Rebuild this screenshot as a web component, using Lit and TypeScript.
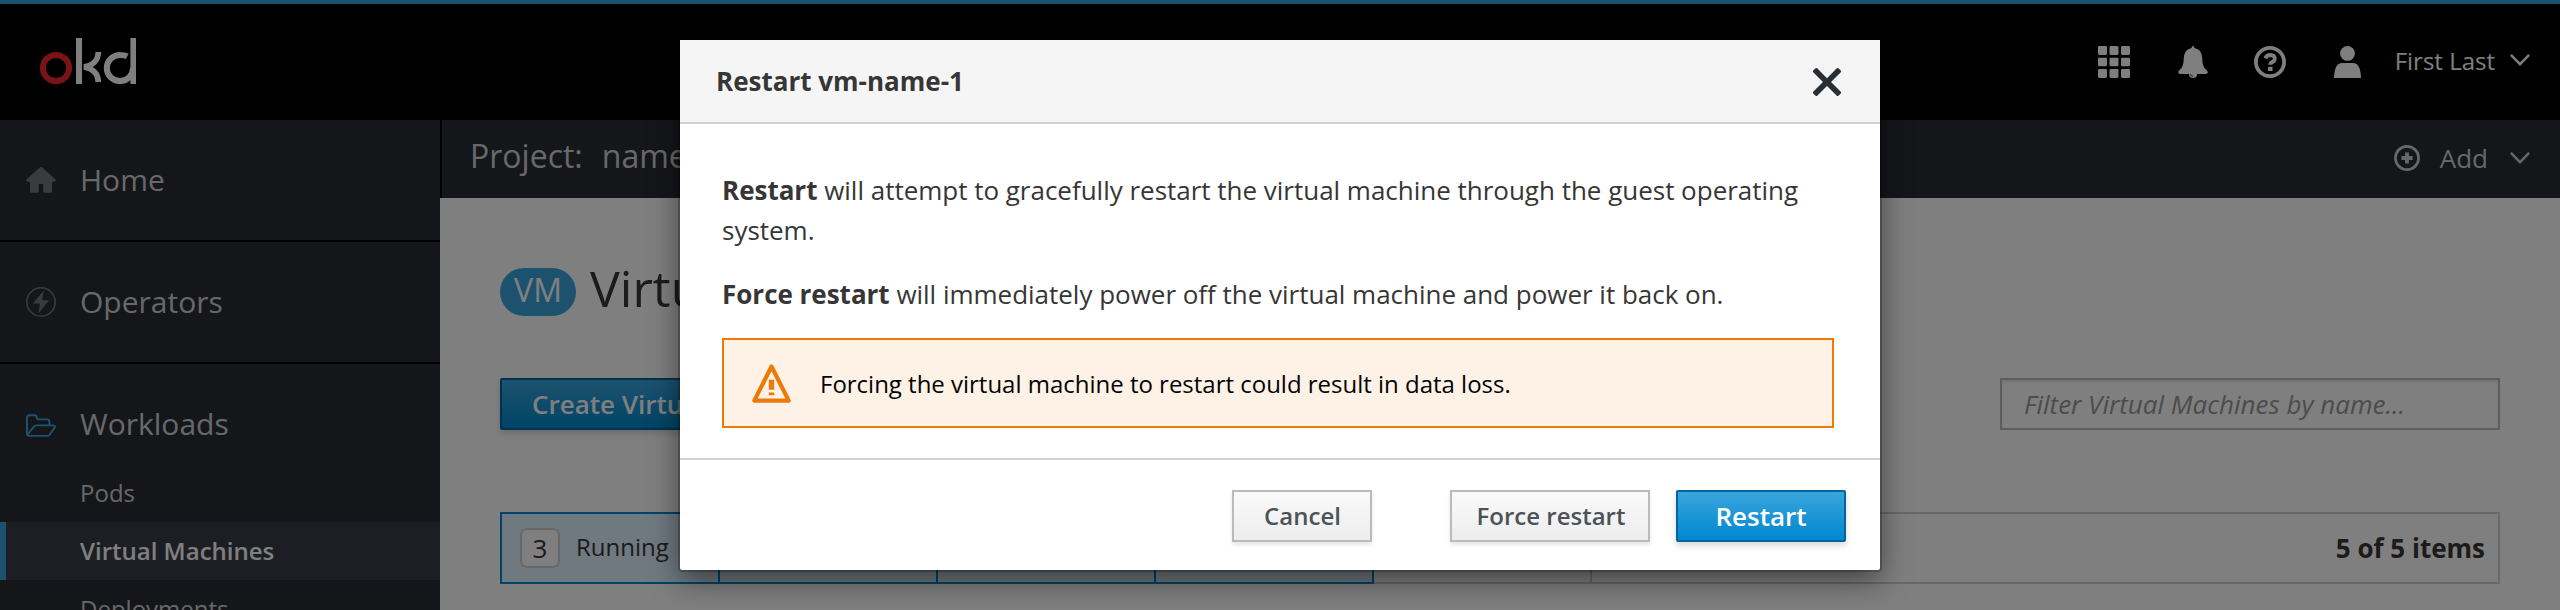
import { LitElement, html, css } from "lit";
import { customElement } from "lit/decorators.js";

const homeIcon = html`<svg width="30" height="30" viewBox="0 0 30 30" fill="currentColor">
  <path d="M15 1.8 Q15.6 1.8 16.2 2.4 L29.4 14.2 Q30.2 15.2 29.4 16.2 Q28.7 17 26 17 V26.2 Q26 27.8 24.4 27.8 H18.6 Q17.2 27.8 17.2 26.4 V19 H12.8 V26.4 Q12.8 27.8 11.4 27.8 H5.6 Q4 27.8 4 26.2 V17 Q1.3 17 .6 16.2 Q-.2 15.2 .6 14.2 L13.8 2.4 Q14.4 1.8 15 1.8Z"/>
</svg>`;

const boltIcon = html`<svg width="30" height="30" viewBox="0 0 30 30">
  <circle cx="15" cy="15" r="14.2" fill="none" stroke="currentColor" stroke-width="1.6"/>
  <path d="M17.8 3.4 L7 16.4 H14 L12.4 26.6 L23 13.2 H16.2Z" fill="currentColor"/>
</svg>`;

const folderIcon = html`<svg width="30" height="24" viewBox="0 0 30 24" fill="none" stroke="currentColor" stroke-width="1.9" stroke-linejoin="round">
  <path d="M1 20 V3.6 Q1 1.2 3.4 1.2 H8.4 Q10.6 1.2 10.8 3.4 Q11 5.4 13 5.4 H21 Q23.4 5.4 23.4 7.8 V11.4"/>
  <path d="M1 20 Q1.2 21.8 3.2 21.9 H21.4 Q22.8 21.9 23.6 20.8 L28.6 13.6 Q29.6 11.6 27.6 11.4 H10.6 Q9 11.4 8 12.6 L1.4 20.6"/>
</svg>`;

const chevron = html`<svg class="chevron" width="20" height="12" viewBox="0 0 20 12" fill="none" stroke="currentColor" stroke-width="2.4">
  <path d="M.9 .9 L10 10.2 L19.1 .9"/>
</svg>`;

const gridIcon = html`<svg width="32" height="32" viewBox="0 0 32 32" fill="currentColor">
  ${[0, 1, 2].map((r) => html`<svg y=${r * 11.5} width="32" height="9">
    <rect x="0" width="9" height="9" rx="1.4"/><rect x="11.5" width="9" height="9" rx="1.4"/><rect x="23" width="9" height="9" rx="1.4"/>
  </svg>`)}
</svg>`;

const bellIcon = html`<svg width="30" height="32" viewBox="0 0 30 32">
  <path fill="currentColor" d="M15 0 Q16.4 0 16.4 2 Q24 3.4 24.2 12 Q24.3 21 28 23.6 Q30 25.4 29.8 26.6 Q29.6 28 28 28 H19 Q19 32 15 32 Q11 32 11 28 H2 Q.4 28 .2 26.6 Q0 25.4 2 23.6 Q5.7 21 5.8 12 Q6 3.4 13.6 2 Q13.6 0 15 0Z"/>
  <path d="M12.6 28.2 Q12.8 30.3 15 30.4" fill="none" stroke="#000" stroke-width=".8"/>
</svg>`;

const helpIcon = html`<svg width="32" height="32" viewBox="0 0 32 32">
  <circle cx="16" cy="16" r="14.1" fill="none" stroke="currentColor" stroke-width="3.8"/>
  <path d="M11.4 12.4 Q12.4 9 16.2 9 Q20.8 9.2 20.8 12.6 Q20.8 14.8 18.4 16 Q16.3 17 16.3 18.8" fill="none" stroke="currentColor" stroke-width="3.8"/>
  <rect x="14.1" y="20.8" width="4.4" height="4.2" rx=".6" fill="currentColor"/>
</svg>`;

const userIcon = html`<svg width="27" height="32" viewBox="0 0 27 32" fill="currentColor">
  <circle cx="13.5" cy="7.4" r="7.4"/>
  <path d="M0 32 Q.4 17 8 17 H19 Q26.6 17 27 32Z"/>
</svg>`;

const addIcon = html`<svg width="26" height="26" viewBox="0 0 26 26" fill="none" stroke="currentColor">
  <circle cx="13" cy="13" r="11.6" stroke-width="2.7"/>
  <path d="M13 7.4 V18.6 M7.4 13 H18.6" stroke-width="3.8"/>
</svg>`;

const logo = html`<svg width="96" height="46" viewBox="0 0 96 46" fill="none" stroke-width="6">
  <circle cx="16" cy="30" r="13.1" stroke="#f0282d"/>
  <g stroke="#fff">
    <path d="M39 0 V46"/>
    <path d="M58.4 14 C58.2 22 53 27.6 44 28.8 C53 30.4 58.2 36 58.2 44" stroke-width="5.8"/>
    <path d="M87.2 18.4 Q84.4 16.9 80.2 16.9 A13.1 13.1 0 1 0 93 30"/>
    <path d="M93.2 0 V46" stroke-width="5.6"/>
  </g>
</svg>`;

const warningIcon = html`<svg width="39" height="39" viewBox="0 0 39 39">
  <path d="M19.5 2.5 L36.7 36.6 H2.3Z" fill="none" stroke="currentColor" stroke-width="4.2" stroke-linejoin="round"/>
  <path d="M16.8 15.8 h5.4 v10 h-5.4z M16.8 28.4 h5.4 v2.8 h-5.4z" fill="currentColor"/>
</svg>`;

const closeIcon = html`<svg width="30" height="30" viewBox="0 0 30 30" fill="currentColor">
  <path d="M3.6 1.2 Q4.4 .6 5.2 1.2 L15 11.2 L24.8 1.2 Q25.6 .6 26.4 1.2 L28.8 3.6 Q29.4 4.4 28.8 5.2 L19 15 L28.8 24.8 Q29.4 25.6 28.8 26.4 L26.4 28.8 Q25.6 29.4 24.8 28.8 L15 18.9 L5.2 28.8 Q4.4 29.4 3.6 28.8 L1.2 26.4 Q.6 25.6 1.2 24.8 L11 15 L1.2 5.2 Q.6 4.4 1.2 3.6Z"/>
</svg>`;

@customElement("app-root")
export class AppRoot extends LitElement {
  static styles = css`
    :host {
      display: block;
      position: relative;
      height: 610px;
      overflow: hidden;
      font-family: "Open Sans", sans-serif;
      font-size: 26px;
      color: #363636;
      background: #fff;
    }
    * { box-sizing: border-box; }
    svg { display: block; flex: none; }
    .page { height: 610px; display: flex; flex-direction: column; overflow: hidden; }

    .masthead {
      flex: none; height: 120px; border-top: 4px solid #39a5dc; background: #000; color: #fff;
      display: flex; align-items: center; justify-content: space-between; padding: 0 30px 0 40px;
    }
    .masthead > svg { margin-bottom: 2px; }
    .tools { display: flex; align-items: center; }
    .tools .bell { margin-left: 48px; }
    .tools .help { margin-left: 46px; }
    .tools .user { margin-left: 48px; }
    .username { font-size: 24px; line-height: 32px; padding-bottom: 3px; margin: 0 15px 0 34px; }
    .tools .chevron { margin-bottom: 4px; }

    .below { flex: 1; min-height: 0; display: flex; }
    .sidebar { flex: none; width: 440px; background: #2a2d34; color: #d1d1d1; }
    .section {
      height: 122px; border-bottom: 2px solid #000; padding-left: 26px;
      display: flex; align-items: center; font-size: 30px; line-height: 40px;
    }
    .section svg { margin-right: 24px; color: #72767b; }
    .section.open { height: 100px; border: 0; padding-top: 20px; }
    .section.open svg { color: #39a5dc; margin-top: 3px; }
    .link {
      height: 58px; line-height: 58px; font-size: 24px; padding-left: 80px;
    }
    .link.active {
      border-left: 6px solid #39a5dc; padding-left: 74px; background: #383d46; color: #fff; font-weight: 600;
    }

    .main { flex: 1; min-width: 0; display: flex; flex-direction: column; }
    .projectbar {
      flex: none; height: 78px; border-left: 2px solid #000; background: #2a2d34; color: #d1d1d1;
      display: flex; align-items: center; justify-content: space-between; padding: 0 30px 0 28px;
    }
    .project { font-size: 32px; line-height: 44px; padding-bottom: 7px; display: flex; gap: 19px; }
    .add { display: flex; align-items: center; line-height: 36px; padding-bottom: 2px; }
    .add span { margin: 0 22px 0 20px; }

    .content { flex: 1; padding: 60px 60px 0; }
    .title { display: flex; height: 68px; gap: 14px; padding-top: 10px; }
    .kind {
      width: 76px; height: 48px; border-radius: 24px; background: #39a5dc; color: #fff;
      font-size: 32px; line-height: 44px; text-align: center;
    }
    .name { font-size: 50px; line-height: 68px; margin-top: -14px; white-space: nowrap; }
    .toolbar { display: flex; justify-content: space-between; margin-top: 52px; }
    .btn {
      display: block; height: 52px; font: 600 24px/48px "Open Sans", sans-serif; text-align: center; white-space: nowrap;
      border: 2px solid #bbb; color: #4d5258; background: linear-gradient(#fafafa, #ededed);
      box-shadow: 0 3px 4px rgba(3, 3, 3, .1); padding: 0;
    }
    .btn.primary {
      border-color: #00659c; border-radius: 2px; color: #fff; background: linear-gradient(#39a5dc, #0088ce);
      font-size: 26px; line-height: 44px; box-shadow: 0 4px 6px rgba(3, 3, 3, .15);
    }
    .btn.create { padding: 0 30px; line-height: 43px; }
    .filter {
      width: 500px; height: 52px; border: 2px solid #bbb; padding: 0 22px; line-height: 48px;
      font-style: italic; color: #999; box-shadow: inset 0 2px 3px rgba(3, 3, 3, .1);
    }
    .statuses { display: flex; height: 72px; margin-top: 82px; border: 2px solid #d1d1d1; }
    .status {
      width: 220px; margin: -2px 0 -2px -2px; border: 2px solid #0088ce; background: #def3ff;
      display: flex; align-items: center; padding-left: 18px; font-size: 24px;
    }
    .status.off { border-color: #d1d1d1; border-left: 0; background: none; width: 218px; margin-left: 0; }
    .count {
      width: 40px; height: 40px; border: 2px solid #d3d0d0; border-radius: 7px; background: #fff;
      font-size: 26px; line-height: 36px; text-align: center; margin-right: 15px;
    }
    .status .label { padding: 0 0 3px 1px; }
    .total { margin-left: auto; padding-right: 13px; font-weight: 700; line-height: 68px; }

    .backdrop { position: absolute; inset: 0; background: rgba(0, 0, 0, .5); }
    .modal {
      position: absolute; left: 680px; top: 40px; width: 1200px; height: 530px; background: #fff;
      border-radius: 0 0 2px 2px;
      box-shadow: 0 0 0 2px rgba(0, 0, 0, .2), 0 10px 30px rgba(0, 0, 0, .5);
    }
    .modal-head {
      height: 84px; border-bottom: 2px solid #d1d1d1; background: #f5f5f5;
      display: flex; align-items: center; justify-content: space-between; padding: 0 38px 0 36px;
      font-weight: 700;
    }
    .modal-head span { line-height: 36px; padding-bottom: 1px; }
    .modal-head svg { color: #292e34; margin-top: 1px; }
    .modal-body { height: 334px; padding: 46px 46px 0 42px; line-height: 40px; }
    p { margin: 0 0 24px; letter-spacing: -.015px; }
    .alert {
      height: 90px; border: 2px solid #ec7a08; background: #fdf2e5; color: #030303; font-size: 24px; line-height: 34px;
      display: flex; align-items: center; padding: 2px 0 0 28px; gap: 29px; letter-spacing: -.01px;
    }
    .alert svg { color: #ec7a08; margin-top: -1px; }
    .modal-foot {
      height: 112px; border-top: 2px solid #d1d1d1; padding: 30px 34px 0 0; display: flex; justify-content: flex-end;
    }
    .cancel { width: 140px; margin-right: 78px; padding-left: 1px; }
    .force { width: 200px; margin-right: 26px; padding-left: 2px; }
    .restart { width: 170px; }
  `;

  render() {
    return html`
      <div class="page">
        <header class="masthead">
          ${logo}
          <div class="tools">
            ${gridIcon}
            <div class="bell">${bellIcon}</div>
            <div class="help">${helpIcon}</div>
            <div class="user">${userIcon}</div>
            <span class="username">First Last</span>
            ${chevron}
          </div>
        </header>
        <div class="below">
          <nav class="sidebar">
            <div class="section">${homeIcon}<span>Home</span></div>
            <div class="section">${boltIcon}<span>Operators</span></div>
            <div class="section open">${folderIcon}<span>Workloads</span></div>
            <div class="link">Pods</div>
            <div class="link active">Virtual Machines</div>
            <div class="link">Deployments</div>
          </nav>
          <main class="main">
            <div class="projectbar">
              <div class="project"><span>Project:</span><span>name</span></div>
              <div class="add">${addIcon}<span>Add</span>${chevron}</div>
            </div>
            <div class="content">
              <div class="title"><div class="kind">VM</div><div class="name">Virtual Machines</div></div>
              <div class="toolbar">
                <button class="btn primary create">Create Virtual Machine</button>
                <div class="filter">Filter Virtual Machines by name...</div>
              </div>
              <div class="statuses">
                <div class="status"><span class="count">3</span><span class="label">Running</span></div>
                <div class="status"></div>
                <div class="status"></div>
                <div class="status"></div>
                <div class="status off"></div>
                <div class="total">5 of 5 items</div>
              </div>
            </div>
          </main>
        </div>
      </div>
      <div class="backdrop"></div>
      <div class="modal" role="dialog">
        <div class="modal-head"><span>Restart vm-name-1</span>${closeIcon}</div>
        <div class="modal-body">
          <p><b>Restart</b> will attempt to gracefully restart the virtual machine through the guest operating system.</p>
          <p><b>Force restart</b> will immediately power off the virtual machine and power it back on.</p>
          <div class="alert">${warningIcon}<span>Forcing the virtual machine to restart could result in data loss.</span></div>
        </div>
        <div class="modal-foot">
          <button class="btn cancel">Cancel</button>
          <button class="btn force">Force restart</button>
          <button class="btn primary restart">Restart</button>
        </div>
      </div>
    `;
  }
}
